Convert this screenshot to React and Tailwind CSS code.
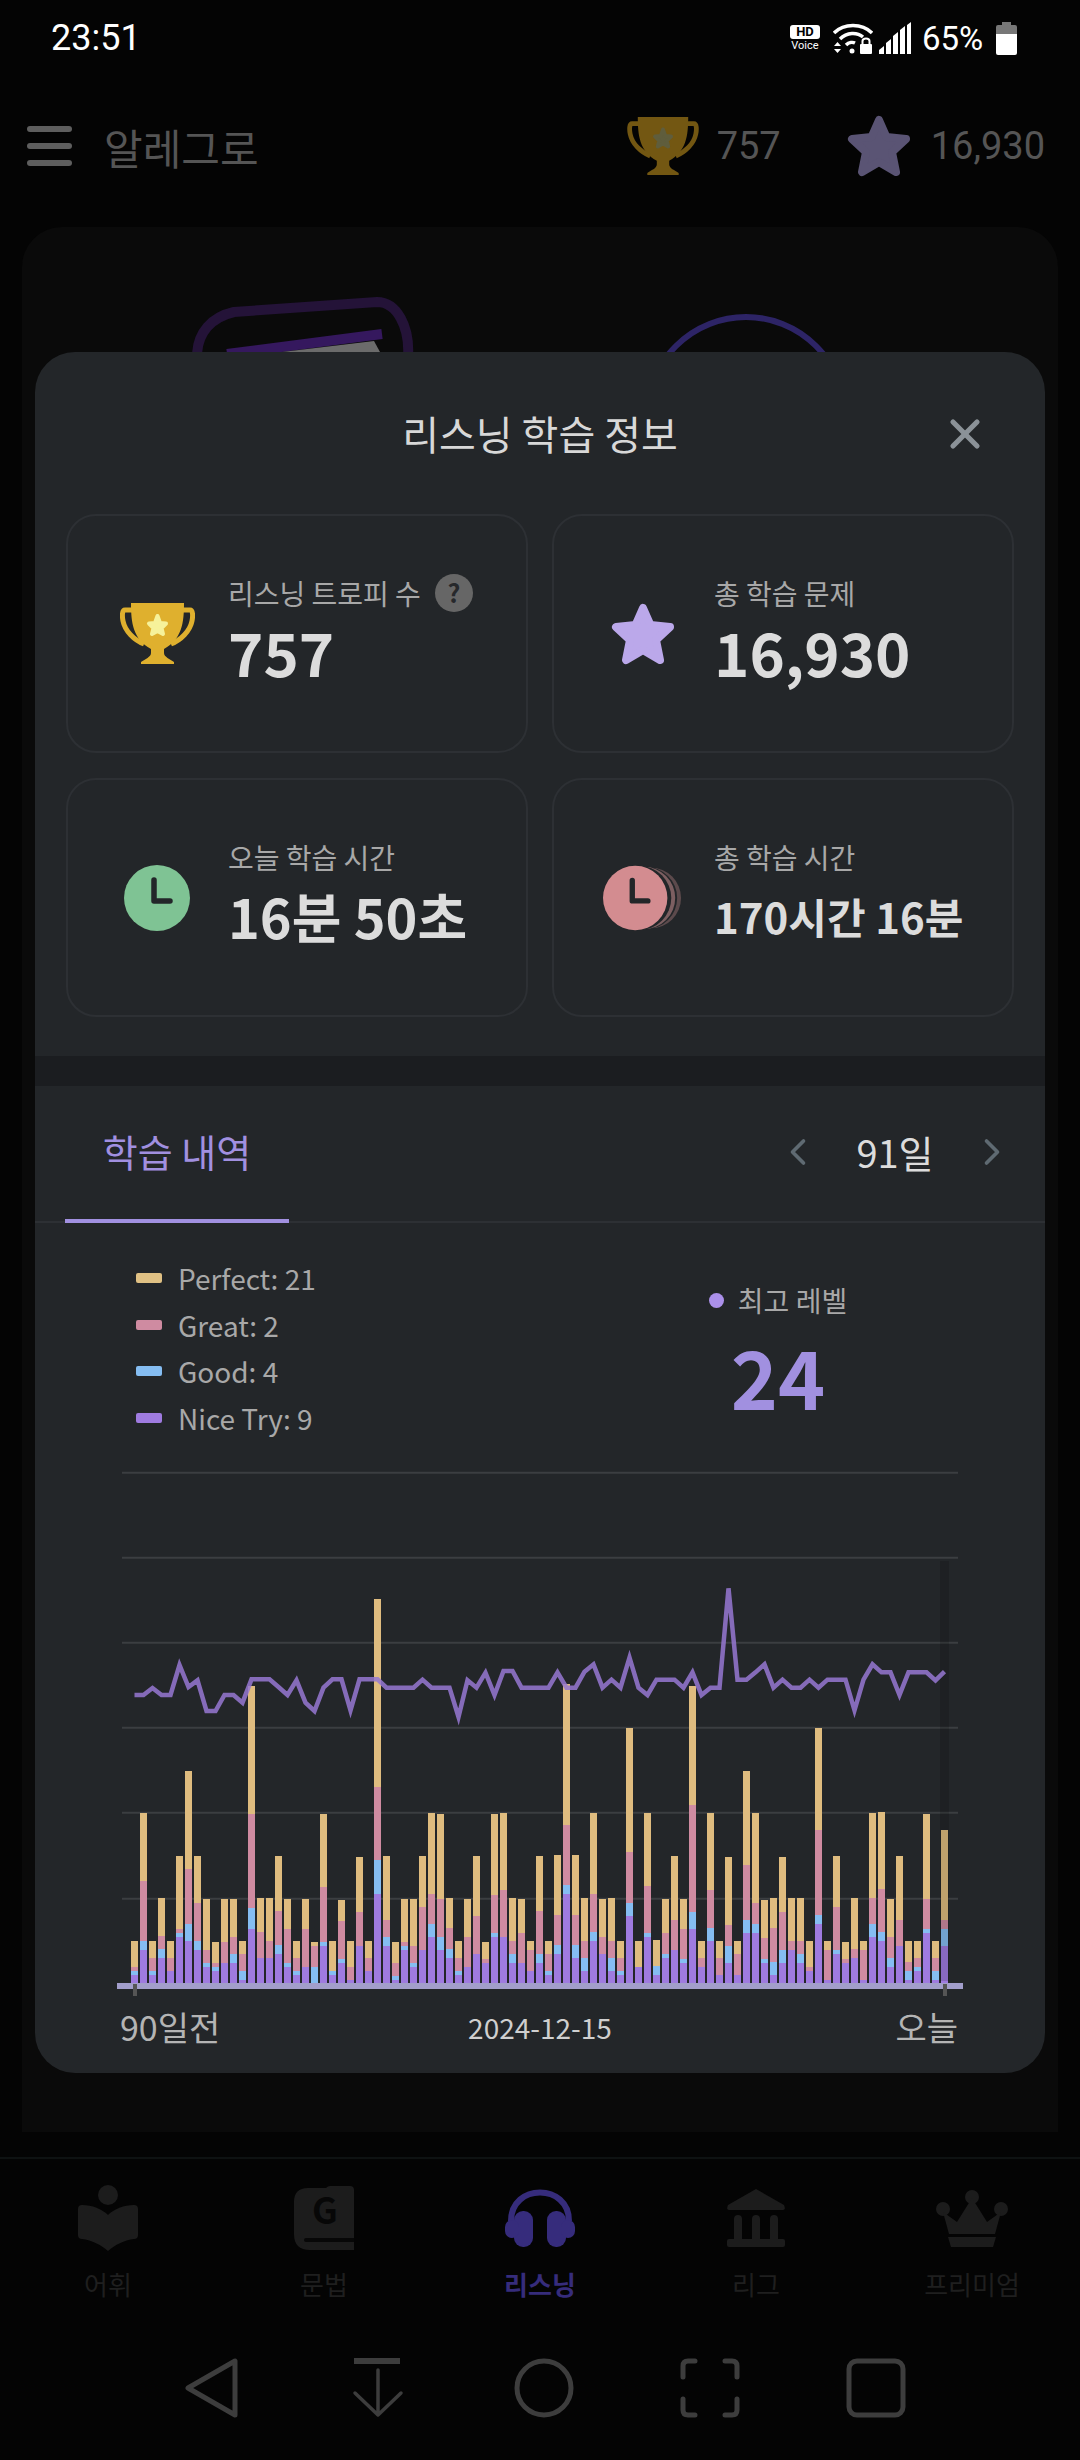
import { ChevronLeft, ChevronRight, X } from 'lucide-react';

// top edge of each stacked segment, in 3x chart px: yellow, pink, blue, purple
const bars = [
  [1140,1218,1230,1242],[756,960,1140,1167],[1140,1191,1230,1242],[1011,1125,1164,1191],[1140,1191,1230,1230],
  [885,1104,1116,1128],[630,924,1089,1140],[885,1026,1140,1167],[1014,1167,1206,1218],[1143,1206,1218,1230],
  [1014,1143,1206,1206],[1014,1128,1179,1206],[1140,1179,1230,1257],[375,759,1041,1104],[1011,1113,1191,1191],
  [1011,1140,1191,1191],[885,1050,1152,1179],[1014,1104,1206,1218],[1140,1191,1230,1242],[1014,1104,1218,1218],
  [1143,1155,1218,1268],[759,978,1143,1155],[1140,1230,1230,1242],[1017,1080,1194,1206],[1140,1218,1257,1257],
  [888,1053,1155,1155],[1140,1191,1230,1230],[114,678,897,999],[885,1077,1128,1155],[1143,1206,1245,1257],
  [1014,1143,1155,1167],[1014,1155,1206,1218],[885,1038,1167,1167],[756,999,1089,1128],[759,1014,1128,1167],
  [1011,1101,1164,1191],[1140,1191,1230,1242],[1014,1128,1218,1218],[885,1065,1179,1179],[1143,1194,1206,1206],
  [759,1002,1116,1128],[756,987,1128,1128],[1011,1140,1179,1206],[1014,1116,1206,1206],[1140,1167,1230,1230],
  [885,1050,1179,1206],[1140,1179,1230,1242],[882,1062,1152,1179],[369,792,972,999],[882,1062,1152,1191],
  [1011,1140,1191,1230],[756,999,1113,1140],[1014,1128,1179,1179],[1011,1140,1191,1230],[1140,1191,1230,1242],
  [501,873,1026,1065],[1140,1218,1218,1218],[756,975,1116,1128],[1137,1216,1216,1242],[1014,1116,1179,1191],
  [885,1077,1167,1167],[1014,1104,1194,1206],[375,732,1053,1104],[1140,1191,1218,1218],[756,987,1101,1140],
  [1140,1191,1242,1242],[888,1092,1155,1206],[1140,1179,1242,1242],[630,912,1077,1116],[756,1026,1089,1116],
  [1017,1131,1194,1206],[1011,1101,1203,1242],[888,1053,1167,1206],[1011,1140,1167,1167],[1011,1140,1179,1206],
  [1140,1218,1230,1230],[501,807,1062,1089],[1140,1167,1257,1257],[885,1038,1167,1179],[1143,1194,1206,1206],
  [1011,1164,1191,1191],[1140,1167,1257,1257],[756,1011,1089,1128],[753,984,1113,1140],[1014,1128,1191,1218],
  [885,1077,1155,1155],[1140,1203,1230,1257],[1140,1191,1218,1230],[759,1014,1104,1116],[1140,1191,1230,1257],
  [807,1077,1104,1155],
];

const level = [
  402,402,381,402,402,312,378,358,450,450,402,402,425,355,355,355,378,402,358,425,450,380,355,355,448,355,355,355,
  380,380,380,380,356,380,380,380,468,358,380,335,402,330,330,380,380,380,380,334,380,380,332,310,380,356,380,290,
  380,402,356,356,356,380,334,402,380,380,82,356,356,334,310,380,356,380,380,356,380,356,356,356,448,356,310,334,
  334,402,334,334,334,358,332,
];

const toY = (v) => 1560 + v / 3;
const colors = ['#dfbc7f', '#cf8ba1', '#85bdf2', '#9f7be0'];
const linePoints = level.map((v, i) => `${134.5 + 9 * i},${toY(v)}`).join(' ');

function Chart() {
  return (
    <svg viewBox="35 1460 1010 540" className="block w-[1010px] h-[540px]">
      {[1471.7, 1556.7, 1641.7, 1726.7, 1811.7, 1897.7].map((y) => (
        <line key={y} x1="122" x2="958" y1={y} y2={y} stroke="#3b3e41" strokeWidth="2" />
      ))}
      {bars.map((b, i) =>
        b.map((top, s) => {
          const bottom = s === 3 ? 1268 : b[s + 1];
          if (bottom <= top) return null;
          return (
            <rect
              key={s}
              x={131 + 9 * i}
              y={toY(top)}
              width="7"
              height={(bottom - top) / 3}
              fill={colors[s]}
              shapeRendering="crispEdges"
            />
          );
        })
      )}
      <rect x="940" y="1560" width="9" height="420" fill="#000" opacity="0.14" />
      <rect x="117" y="1982" width="846" height="6" fill="#a29ecb" />
      <rect x="133" y="1983" width="4" height="12" fill="#555" />
      <rect x="943" y="1983" width="4" height="12" fill="#555" />
      <polyline points={linePoints} fill="none" stroke="#9678d2" strokeOpacity="0.85" strokeWidth="4.5" />
    </svg>
  );
}

function Trophy({ cup, star, className }) {
  return (
    <svg viewBox="0 0 75 61" className={className}>
      <path d="M11 0H64C64 20 62 36 44 46V50C44 54 50 56 54 59V61H21V59C25 56 31 54 31 50V46C13 36 11 20 11 0Z" fill={cup} />
      <path d="M12 7H5C2 7 2 13 3 18C5 28 14 37 24 41M63 7H70C73 7 73 13 72 18C70 28 61 37 51 41" fill="none" stroke={cup} strokeWidth="5" />
      <polygon points="37.5,13 40,20 46,20.5 41.5,25 43,31 37.5,28 32,31 33.5,25 29,20.5 35,20" fill={star} stroke={star} strokeWidth="4" strokeLinejoin="round" />
    </svg>
  );
}

function Star({ fill, className }) {
  return (
    <svg viewBox="0 0 64 62" className={className}>
      <polygon
        points="32,5 39.5,22 59,24 45,37 49,57 32,47 15,57 19,37 5,24 24.5,22"
        fill={fill}
        stroke={fill}
        strokeWidth="8"
        strokeLinejoin="round"
      />
    </svg>
  );
}

function ClockFace({ fill }) {
  return (
    <>
      <circle cx="33" cy="33" r="33" fill={fill} />
      <path d="M30 15V36H46" fill="none" stroke="#232629" strokeWidth="5.5" strokeLinejoin="round" strokeLinecap="round" />
    </>
  );
}

function StatCard({ icon, label, value, help, valueClass }) {
  return (
    <div className="h-[239px] rounded-[30px] border-2 border-[#2d3034] flex items-center">
      <div className="ml-[49px] w-[80px] flex justify-center shrink-0">{icon}</div>
      <div className="ml-[31px] -mt-[10px]">
        <div className="flex items-center gap-[14px] h-[40px] text-[28px] text-[#a8a8a8]">
          {label}
          {help && (
            <span className="w-[38px] h-[38px] rounded-full bg-[#666] text-[#26282b] text-[25px] font-bold flex items-center justify-center">?</span>
          )}
        </div>
        <div className={`mt-[5px] h-[66px] flex items-center font-bold text-[#dcdcdc] ${valueClass}`}>{value}</div>
      </div>
    </div>
  );
}

function Legend({ color, children }) {
  return (
    <div className="h-[46.5px] flex items-center gap-[16px] text-[28px] text-[#a8a8a8]">
      <span className="w-[26px] h-[10px] rounded-[2px]" style={{ background: color }} />
      {children}
    </div>
  );
}

function InfoModal() {
  return (
    <div className="absolute left-[35px] top-[352px] w-[1010px] h-[1721px] rounded-[40px] bg-[#232629] overflow-hidden">
      <div className="relative h-[162px] flex items-center justify-center text-[40px] text-[#d8d8d8]">
        리스닝 학습 정보
        <X className="absolute right-[56px] top-[58px] w-[48px] h-[48px] text-[#8b9298]" strokeWidth={2.6} />
      </div>
      <div className="mx-[31px] grid grid-cols-2 gap-x-[24px] gap-y-[25px]">
        <StatCard
          help
          label="리스닝 트로피 수"
          value="757"
          valueClass="text-[60px]"
          icon={<Trophy cup="#dfb02e" star="#f6f29a" className="w-[75px] h-[61px]" />}
        />
        <StatCard
          label="총 학습 문제"
          value="16,930"
          valueClass="text-[60px]"
          icon={<Star fill="#bba8ea" className="w-[64px] h-[62px]" />}
        />
        <StatCard
          label="오늘 학습 시간"
          value="16분 50초"
          valueClass="text-[54px]"
          icon={<svg viewBox="0 0 66 66" className="w-[66px] h-[66px]"><ClockFace fill="#7fc394" /></svg>}
        />
        <StatCard
          label="총 학습 시간"
          value="170시간 16분"
          valueClass="text-[42px]"
          icon={
            <svg viewBox="0 0 82 66" className="w-[82px] h-[66px]">
              <circle cx="49" cy="33" r="31" fill="#5c4a4c" />
              <circle cx="44" cy="33" r="32" fill="#232629" />
              <circle cx="42" cy="33" r="32" fill="#7d5f61" />
              <circle cx="37" cy="33" r="33" fill="#232629" />
              <ClockFace fill="#d38c90" />
            </svg>
          }
        />
      </div>
      <div className="mt-[39px] h-[30px] bg-[#1b1d20]" />
      <div className="h-[137px] border-b-2 border-[#2d3034] flex">
        <div className="ml-[30px] w-[224px] -mb-[2px] border-b-4 border-[#a190e0] flex items-center justify-center pb-[4px] text-[38px] text-[#a190e0]">
          학습 내역
        </div>
        <div className="ml-auto mr-[31px] flex items-center pb-[4px]">
          <ChevronLeft className="w-[44px] h-[44px] text-[#5f6a72]" strokeWidth={2} />
          <span className="w-[150px] text-center text-[38px] text-[#dcdcdc]">91일</span>
          <ChevronRight className="w-[44px] h-[44px] text-[#5f6a72]" strokeWidth={2} />
        </div>
      </div>
      <div className="h-[238px] flex">
        <div className="w-[675px] pl-[101px] pt-[32px]">
          <Legend color="#e0c184">Perfect: 21</Legend>
          <Legend color="#cf8ba1">Great: 2</Legend>
          <Legend color="#85bdf2">Good: 4</Legend>
          <Legend color="#9f7be0">Nice Try: 9</Legend>
        </div>
        <div className="w-[136px] pt-[57px] flex flex-col items-center">
          <div className="h-[40px] flex items-center gap-[14px] whitespace-nowrap text-[28px] text-[#a8a8a8]">
            <span className="w-[15px] h-[15px] rounded-full bg-[#ab90ea]" />
            최고 레벨
          </div>
          <div className="mt-[10px] h-[90px] flex items-center font-bold text-[80px] text-[#a190e0]">24</div>
        </div>
      </div>
      <Chart />
      <div className="h-[48px] mx-[85px] grid grid-cols-3 items-center text-[#b4b4b4]">
        <span className="text-[34px]">90일전</span>
        <span className="text-[28px] text-center text-[#cfcfcf]">2024-12-15</span>
        <span className="text-[34px] text-right mr-[2px]">오늘</span>
      </div>
    </div>
  );
}

function StatusBar() {
  return (
    <div className="h-[76px] pl-[51px] pr-[63px] flex items-center justify-between text-white font-['Roboto',sans-serif]">
      <span className="text-[36px] leading-none">23:51</span>
      <div className="flex items-center">
        <div className="w-[30px] flex flex-col items-center">
          <span className="w-[30px] h-[14px] rounded-[3px] bg-white text-black text-[13px] leading-[14px] font-bold text-center">HD</span>
          <span className="text-[11px] leading-[13px]">Voice</span>
        </div>
        <svg viewBox="0 0 40 32" className="ml-[13px] w-[40px] h-[32px]" fill="none" stroke="#fff" strokeWidth="3.5">
          <path d="M1 11C11 1 29 1 39 11" />
          <path d="M7 17C14 10 24 10 30 15" />
          <path d="M13 23C16 20 20 20 22 21" />
          <circle cx="19" cy="29" r="2.5" fill="#fff" stroke="none" />
          <path d="M1 24L4.5 20L8 24ZM1 27L4.5 31L8 27Z" fill="#fff" stroke="none" />
          <rect x="27" y="22" width="12" height="10" rx="1" fill="#fff" stroke="none" />
          <path d="M29.5 22V19C29.5 15.5 36.5 15.5 36.5 19V22" strokeWidth="2" />
        </svg>
        <svg viewBox="0 0 33 32" className="ml-[6px] w-[33px] h-[32px]" fill="#fff">
          <path d="M0 32V28L5 24V32ZM7 32V21L12 17V32ZM14 32V14L19 10V32ZM21 32V8L26 4V32ZM28 32V3L32 0V32Z" />
        </svg>
        <span className="ml-[10px] w-[64px] text-[33px] leading-none">65%</span>
        <svg viewBox="0 0 21 33" className="ml-[10px] w-[21px] h-[33px]">
          <path d="M6 3V0H15V3H19Q21 3 21 5V12H0V5Q0 3 2 3Z" fill="#777" />
          <path d="M0 12H21V31Q21 33 19 33H2Q0 33 0 31Z" fill="#fff" />
        </svg>
      </div>
    </div>
  );
}

function Header() {
  return (
    <div className="mt-[30px] h-[80px] pl-[27px] pr-[35px] flex items-center">
      <div className="flex flex-col gap-[11px]">
        <span className="w-[45px] h-[6px] rounded-full bg-[#5e5e5e]" />
        <span className="w-[45px] h-[6px] rounded-full bg-[#5e5e5e]" />
        <span className="w-[45px] h-[6px] rounded-full bg-[#5e5e5e]" />
      </div>
      <span className="ml-[32px] text-[42px] text-[#555]">알레그로</span>
      <div className="ml-auto flex items-center text-[38px] text-[#555] font-['Roboto',sans-serif]">
        <Trophy cup="#735712" star="#5f5d3c" className="w-[72px] h-[58px]" />
        <span className="ml-[18px]">757</span>
        <Star fill="#5a5474" className="ml-[66px] w-[64px] h-[62px]" />
        <span className="ml-[20px]">16,930</span>
      </div>
    </div>
  );
}

function BackgroundCard() {
  return (
    <div className="mt-[41px] h-[1905px] mx-[22px] rounded-t-[40px] bg-[#0a0a0a]">
      <svg viewBox="0 0 1036 125" className="block w-[1036px] h-[125px]">
        <path d="M175 130C175 105 190 90 212 85L355 75C375 75 388 100 386 130" fill="none" stroke="#241338" strokeWidth="10" />
        <path d="M205 127L360 107" stroke="#35185e" strokeWidth="10" />
        <path d="M235 128L352 114L358 125" fill="#6b6b6b" />
        <circle cx="724" cy="189" r="99" fill="none" stroke="#2d2466" strokeWidth="6" />
      </svg>
    </div>
  );
}

function NavItem({ icon, label, active }) {
  return (
    <div className="flex flex-col items-center">
      <div className="h-[66px] flex items-center">{icon}</div>
      <span className={`mt-[12px] h-[40px] flex items-center text-[26px] ${active ? 'font-bold text-[#362c7c]' : 'text-[#1f1f1f]'}`}>{label}</span>
    </div>
  );
}

function BottomNav() {
  const c = '#1c1c1c';
  return (
    <div className="mt-[25px] border-t-2 border-[#0e1212] pt-[26px] grid grid-cols-5">
      <NavItem
        label="어휘"
        icon={
          <svg viewBox="0 0 60 66" className="w-[60px] h-[66px]" fill={c}>
            <circle cx="30" cy="10" r="10" />
            <path d="M4 20C14 20 24 24 30 30C36 24 46 20 56 20Q60 20 60 24V50Q60 54 56 54C46 55 37 60 30 66C23 60 14 55 4 54Q0 54 0 50V24Q0 20 4 20Z" />
          </svg>
        }
      />
      <NavItem
        label="문법"
        icon={
          <svg viewBox="0 0 60 64" className="w-[60px] h-[64px]" fill={c}>
            <path d="M14 2H32Q34 0 36 0H56Q60 0 60 4V64H16Q0 64 0 48V16Q0 2 14 2Z" />
            <path d="M12 54H60" stroke="#070707" strokeWidth="4" strokeLinecap="round" />
            <text x="31" y="38" textAnchor="middle" fontSize="36" fontWeight="700" fill="#070707">G</text>
          </svg>
        }
      />
      <NavItem
        active
        label="리스닝"
        icon={
          <svg viewBox="0 0 70 58" className="w-[70px] h-[58px]" fill="#362c7c">
            <path d="M6 32C6 -6 64 -6 64 32" fill="none" stroke="#362c7c" strokeWidth="6" />
            <rect x="9" y="22" width="19" height="36" rx="9" />
            <rect x="42" y="22" width="19" height="36" rx="9" />
            <rect x="0" y="31" width="14" height="18" rx="7" />
            <rect x="56" y="31" width="14" height="18" rx="7" />
          </svg>
        }
      />
      <NavItem
        label="리그"
        icon={
          <svg viewBox="0 0 58 58" className="w-[58px] h-[58px]" fill={c}>
            <path d="M29 0L57 16Q59 21 56 21H2Q-1 21 1 16Z" />
            <rect x="7" y="26" width="8" height="28" rx="4" />
            <rect x="25" y="26" width="8" height="28" rx="4" />
            <rect x="43" y="26" width="8" height="28" rx="4" />
            <rect x="0" y="50" width="58" height="8" rx="2" />
          </svg>
        }
      />
      <NavItem
        label="프리미엄"
        icon={
          <svg viewBox="0 0 74 57" className="w-[74px] h-[57px]" fill={c}>
            <circle cx="37" cy="7" r="7" />
            <circle cx="8" cy="19" r="7" />
            <circle cx="66" cy="19" r="7" />
            <path d="M37 8L52 32L66 22L60 44H14L8 22L22 32Z" />
            <path d="M13 47H61L58 57H16Z" />
          </svg>
        }
      />
    </div>
  );
}

function SystemNav() {
  const props = { viewBox: '0 0 60 60', className: 'w-[60px] h-[60px]', fill: 'none', stroke: '#3d3d3d', strokeWidth: 5, strokeLinejoin: 'round', strokeLinecap: 'round' };
  return (
    <div className="mt-[55px] pl-[182px] flex gap-[106px]">
      <svg {...props}><path d="M53 3V57L6 30Z" /></svg>
      <svg {...props}>
        <path d="M6 3H52" strokeWidth="6" strokeLinecap="butt" />
        <path d="M30 12V57M7 35L30 57L53 35" strokeWidth="3.5" />
      </svg>
      <svg {...props}><circle cx="30" cy="30" r="27" /></svg>
      <svg {...props}>
        <path d="M3 19V8Q3 3 8 3H15M45 3H52Q57 3 57 8V19M57 41V52Q57 57 52 57H45M15 57H8Q3 57 3 52V41" />
      </svg>
      <svg {...props}><rect x="3" y="3" width="54" height="54" rx="8" /></svg>
    </div>
  );
}

export default function App() {
  return (
    <div className="relative w-[1080px] h-[2460px] overflow-hidden bg-[#040404] font-['Noto_Sans_CJK_KR',sans-serif]">
      <StatusBar />
      <Header />
      <BackgroundCard />
      <BottomNav />
      <SystemNav />
      <InfoModal />
    </div>
  );
}
